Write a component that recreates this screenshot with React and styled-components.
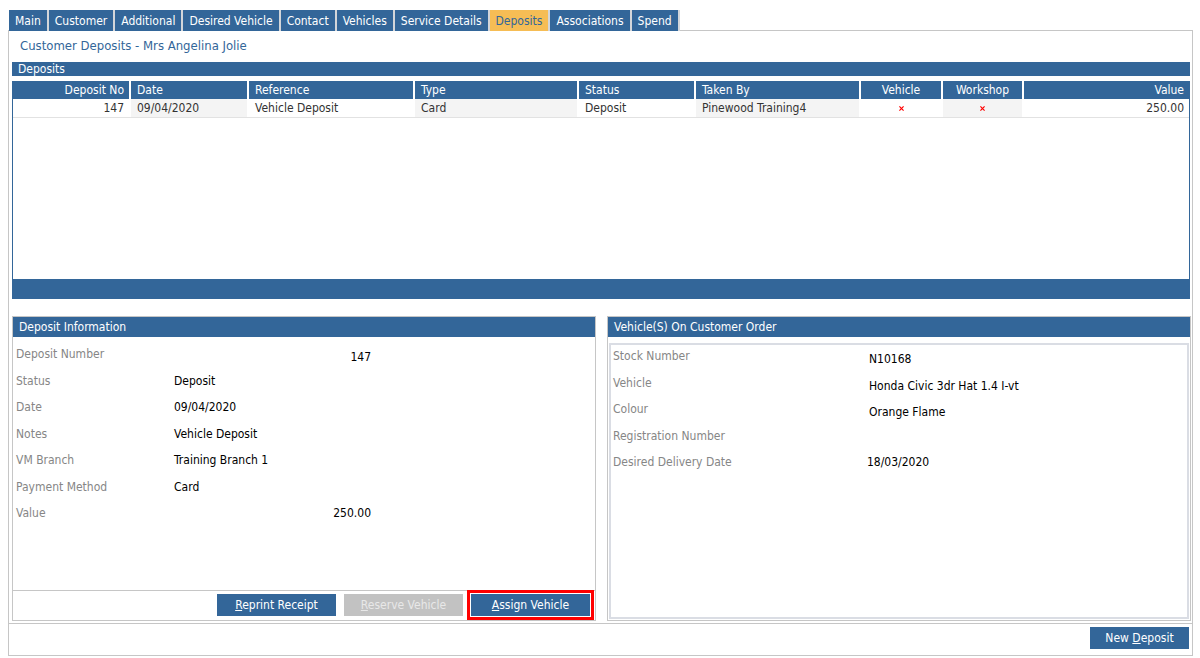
import React from 'react';
import styled, { createGlobalStyle } from 'styled-components';

const BLUE = '#336699';

const GlobalStyle = createGlobalStyle`
  html, body {
    margin: 0;
    padding: 0;
    background: #fff;
  }
  body {
    font-family: "DejaVu Sans Condensed", "Liberation Sans", sans-serif;
    font-size: 12px;
    color: #000;
  }
`;

const tabs = ['Main', 'Customer', 'Additional', 'Desired Vehicle', 'Contact', 'Vehicles', 'Service Details', 'Deposits', 'Associations', 'Spend'];

const columns = [
  { title: 'Deposit No', align: 'right' },
  { title: 'Date' },
  { title: 'Reference' },
  { title: 'Type' },
  { title: 'Status' },
  { title: 'Taken By' },
  { title: 'Vehicle', align: 'center' },
  { title: 'Workshop', align: 'center' },
  { title: 'Value', align: 'right' },
];

const deposits = [
  ['147', '09/04/2020', 'Vehicle Deposit', 'Card', 'Deposit', 'Pinewood Training4', 'x', 'x', '250.00'],
];

const depositInfo = [
  { label: 'Deposit Number', value: '147', right: true, offset: 3 },
  { label: 'Status', value: 'Deposit' },
  { label: 'Date', value: '09/04/2020' },
  { label: 'Notes', value: 'Vehicle Deposit' },
  { label: 'VM Branch', value: 'Training Branch 1' },
  { label: 'Payment Method', value: 'Card' },
  { label: 'Value', value: '250.00', right: true },
];

const vehicleInfo = [
  { label: 'Stock Number', value: 'N10168', offset: 3 },
  { label: 'Vehicle', value: 'Honda Civic 3dr Hat 1.4 I-vt', offset: 3 },
  { label: 'Colour', value: 'Orange Flame', offset: 3 },
  { label: 'Registration Number', value: '' },
  { label: 'Desired Delivery Date', value: '18/03/2020', shift: -2 },
];

const Page = styled.div`
  padding: 10px 0 0 8px;
  width: 1185px;
`;

const TabStrip = styled.div`
  display: flex;
  margin-left: 1px;
  position: relative;
  z-index: 1;
  margin-bottom: -1px;
`;

const Tab = styled.div`
  height: 21px;
  box-sizing: border-box;
  padding: 1px 6px 0;
  line-height: 20px;
  background: ${p => (p.$active ? '#f6bd55' : BLUE)};
  color: ${p => (p.$active ? BLUE : '#fff')};
  border-right: 2px solid #d3d6da;
  white-space: nowrap;
`;

const Frame = styled.div`
  border: 1px solid #c6c6c6;
  padding: 0 2px 0 3px;
`;

const Title = styled.div`
  height: 31px;
  box-sizing: border-box;
  padding: 8px 0 0 8px;
  font-size: 13px;
  line-height: 14px;
  color: ${BLUE};
`;

const SectionBar = styled.div`
  height: 14px;
  line-height: 15px;
  padding-left: 6px;
  background: ${BLUE};
  color: #fff;
`;

const Grid = styled.div`
  margin-top: 5px;
  height: 198px;
  border-left: 1px solid ${BLUE};
  border-right: 1px solid ${BLUE};
  background: #fff;
`;

const GridRow = styled.div`
  display: grid;
  grid-template-columns: 116px 116px 164px 162px 115px 163px 80px 79px 1fr;
  column-gap: 2px;
  height: 18px;
  line-height: 18px;
  border-bottom: ${p => (p.$head ? 'none' : '1px solid #e2e2e2')};
  background: #fff;
`;

const Cell = styled.div`
  padding: 0 ${p => (p.$align === 'right' ? '5px' : '6px')};
  text-align: ${p => p.$align || 'left'};
  white-space: nowrap;
  overflow: hidden;
  background: ${p => (p.$head ? BLUE : p.$shade ? '#f4f4f4' : '#fff')};
  color: ${p => (p.$head ? '#fff' : '#333')};
`;

const GridFooter = styled.div`
  height: 20px;
  background: ${BLUE};
`;

const Panels = styled.div`
  display: grid;
  grid-template-columns: 584px 584px;
  column-gap: 11px;
  margin-top: 17px;
`;

const Panel = styled.div`
  border: 1px solid #c6c6c6;
  height: 303px;
  display: flex;
  flex-direction: column;
`;

const PanelHead = styled.div`
  height: 20px;
  line-height: 20px;
  padding-left: 6px;
  background: ${BLUE};
  color: #fff;
  flex-shrink: 0;
`;

const PanelBody = styled.div`
  flex: 1;
  padding: 10px 3px 0;
`;

const InsetBox = styled.div`
  flex: 1;
  margin: 6px 1px 1px;
  border: 2px solid #dadde4;
  padding: 4px 2px 0;
`;

const FieldRow = styled.div`
  display: flex;
  height: 26.5px;
  line-height: 14px;
`;

const Label = styled.div`
  width: ${p => p.$width}px;
  flex-shrink: 0;
  color: #868686;
`;

const Value = styled.div`
  width: ${p => p.$width}px;
  margin-top: ${p => p.$offset || 0}px;
  margin-left: ${p => p.$shift || 0}px;
  text-align: ${p => (p.$right ? 'right' : 'left')};
  white-space: nowrap;
  color: #000;
`;

const ButtonBar = styled.div`
  display: flex;
  justify-content: flex-end;
  gap: 8px;
  height: 30px;
  box-sizing: border-box;
  padding: 3px 5px 0 0;
  border-top: 1px solid #c6c6c6;
`;

const Button = styled.button`
  width: ${p => p.$width || 119}px;
  height: 22px;
  border: none;
  padding: 0;
  font-family: inherit;
  font-size: 12px;
  background: ${p => (p.disabled ? '#c2c2c2' : BLUE)};
  color: ${p => (p.disabled ? '#e8e8e8' : '#fff')};
  outline: ${p => (p.$marked ? '3px solid #f00' : 'none')};
  outline-offset: 1px;
  cursor: ${p => (p.disabled ? 'default' : 'pointer')};
  u {
    text-decoration: underline;
  }
`;

const Footer = styled.div`
  display: flex;
  justify-content: flex-end;
  margin: 2px -2px 0 -3px;
  height: 32px;
  box-sizing: border-box;
  padding: 3px 3px 0 0;
  border-top: 1px solid #c6c6c6;
`;

const Cross = () => (
  <svg width="5" height="5" viewBox="0 0 6 6" style={{ verticalAlign: 'middle' }}>
    <path d="M0.5 0.5 L5.5 5.5 M5.5 0.5 L0.5 5.5" stroke="#f00" strokeWidth="1.4" />
  </svg>
);

const Key = ({ text, at = 0 }) => (
  <>
    {text.slice(0, at)}
    <u>{text[at]}</u>
    {text.slice(at + 1)}
  </>
);

export default function App() {
  return (
    <>
      <GlobalStyle />
      <Page>
        <TabStrip>
          {tabs.map(t => (
            <Tab key={t} $active={t === 'Deposits'}>{t}</Tab>
          ))}
        </TabStrip>
        <Frame>
          <Title>Customer Deposits - Mrs Angelina Jolie</Title>
          <SectionBar>Deposits</SectionBar>
          <Grid>
            <GridRow $head>
              {columns.map(c => (
                <Cell key={c.title} $head $align={c.align}>{c.title}</Cell>
              ))}
            </GridRow>
            {deposits.map(row => (
              <GridRow key={row[0]}>
                {row.map((v, i) => (
                  <Cell key={i} $align={columns[i].align} $shade={i % 2 === 1}>
                    {v === 'x' ? <Cross /> : v}
                  </Cell>
                ))}
              </GridRow>
            ))}
          </Grid>
          <GridFooter />
          <Panels>
            <Panel>
              <PanelHead>Deposit Information</PanelHead>
              <PanelBody>
                {depositInfo.map(f => (
                  <FieldRow key={f.label}>
                    <Label $width={158}>{f.label}</Label>
                    <Value $width={197} $right={f.right} $offset={f.offset}>{f.value}</Value>
                  </FieldRow>
                ))}
              </PanelBody>
              <ButtonBar>
                <Button><Key text="Reprint Receipt" /></Button>
                <Button disabled><Key text="Reserve Vehicle" /></Button>
                <Button $marked><Key text="Assign Vehicle" /></Button>
              </ButtonBar>
            </Panel>
            <Panel>
              <PanelHead>Vehicle(S) On Customer Order</PanelHead>
              <InsetBox>
                {vehicleInfo.map(f => (
                  <FieldRow key={f.label}>
                    <Label $width={256}>{f.label}</Label>
                    <Value $width={170} $offset={f.offset} $shift={f.shift}>{f.value}</Value>
                  </FieldRow>
                ))}
              </InsetBox>
            </Panel>
          </Panels>
          <Footer>
            <Button $width={99}>New <Key text="Deposit" /></Button>
          </Footer>
        </Frame>
      </Page>
    </>
  );
}
